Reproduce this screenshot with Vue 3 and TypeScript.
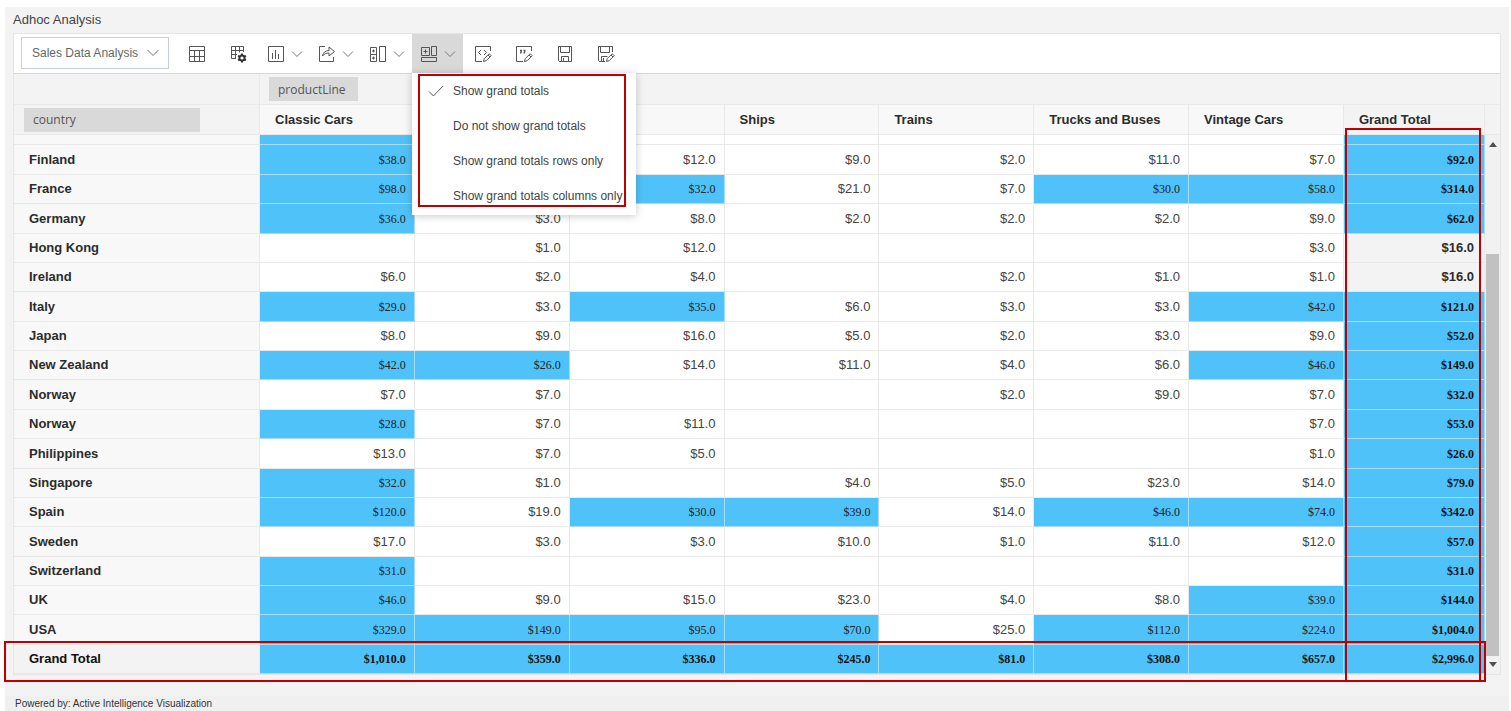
<script setup lang="ts">
import { ref } from 'vue'

interface Row {
  name: string
  cells: string[]
}

interface Tool {
  id: string
  label: string
  menu: boolean
}

const columns: string[] = [
  'Classic Cars',
  '',
  '',
  'Ships',
  'Trains',
  'Trucks and Buses',
  'Vintage Cars',
  'Grand Total',
]

const source: [string, string][] = [
  ['Finland', '38 - 12 9 2 11 7 92'],
  ['France', '98 - 32 21 7 30 58 314'],
  ['Germany', '36 3 8 2 2 2 9 62'],
  ['Hong Kong', '- 1 12 - - - 3 16'],
  ['Ireland', '6 2 4 - 2 1 1 16'],
  ['Italy', '29 3 35 6 3 3 42 121'],
  ['Japan', '8 9 16 5 2 3 9 52'],
  ['New Zealand', '42 26 14 11 4 6 46 149'],
  ['Norway', '7 7 - - 2 9 7 32'],
  ['Norway', '28 7 11 - - - 7 53'],
  ['Philippines', '13 7 5 - - - 1 26'],
  ['Singapore', '32 1 - 4 5 23 14 79'],
  ['Spain', '120 19 30 39 14 46 74 342'],
  ['Sweden', '17 3 3 10 1 11 12 57'],
  ['Switzerland', '31 - - - - - - 31'],
  ['UK', '46 9 15 23 4 8 39 144'],
  ['USA', '329 149 95 70 25 112 224 1,004'],
  ['Grand Total', '1,010 359 336 245 81 308 657 2,996'],
]

const rows: Row[] = source.map(([name, values]) => ({
  name,
  cells: values.split(' ').map((v) => (v === '-' ? '' : v)),
}))

const isHigh = (value: string): boolean => Number(value.replace(',', '')) > 25

const tools: Tool[] = [
  { id: 'grid', label: 'Grid', menu: false },
  { id: 'fields', label: 'Field settings', menu: false },
  { id: 'chart', label: 'Chart', menu: true },
  { id: 'export', label: 'Export', menu: true },
  { id: 'sub', label: 'Subtotals', menu: true },
  { id: 'grand', label: 'Grand totals', menu: true },
  { id: 'code', label: 'Conditional formatting', menu: false },
  { id: 'number', label: 'Number formatting', menu: false },
  { id: 'save', label: 'Save', menu: false },
  { id: 'saveas', label: 'Save as', menu: false },
]

const options: string[] = [
  'Show grand totals',
  'Do not show grand totals',
  'Show grand totals rows only',
  'Show grand totals columns only',
]

const selected = ref(0)
const report = ref('Sales Data Analysis')
</script>

<template>
  <div class="page">
    <h1 class="title">Adhoc Analysis</h1>
    <main class="panel">
      <div class="toolbar">
        <div class="picker">
          <select v-model="report" aria-label="Report">
            <option>Sales Data Analysis</option>
          </select>
          <svg class="chev" width="12" height="8" viewBox="0 0 12 8"><path d="M.5 1 6 6.5 11.5 1" /></svg>
        </div>
        <div v-for="t in tools" :key="t.id" class="slot">
          <button type="button" class="tool" :class="{ wide: t.menu, active: t.id === 'grand' }" :aria-label="t.label">
            <svg class="icon" width="18" height="18" viewBox="0 0 18 18">
              <g v-if="t.id === 'grid'">
                <path d="M1.5 1.5h15v15h-15zM1.5 5.500h15M1.5 11.5h15M6.5 5.500v11M11.5 5.500v11" />
              </g>
              <g v-else-if="t.id === 'fields'">
                <path d="M14.500 7V1.500h-12v12H7M2.500 5.500h12M2.500 9.500H8M6.500 1.500v12M10.500 1.500v6" />
                <circle cx="13" cy="13" r="2.600" class="gear" />
                <path class="teeth" d="M13 8.500v2M13 15.500v2M9.100 10.750l1.800 1M15.100 14.250l1.800 1M9.100 15.250l1.800-1M15.100 11.750l1.800-1" />
              </g>
              <g v-else-if="t.id === 'chart'">
                <path d="M1.500 1.500h15v15h-15zM5.500 8v6M8.500 5v9M11.500 9v5" />
              </g>
              <g v-else-if="t.id === 'export'">
                <path d="M7 1.500H1.500v15h14V12" />
                <path d="M4.500 11C5 7.500 7.500 5.500 11 5.500V2L16.500 6.500 11 11V8C8 8 6 9 4.500 11z" />
              </g>
              <g v-else-if="t.id === 'sub'">
                <path d="M1.500 2.500h6v14h-6zM1.500 9.500h6M10.500 1.500h6v15h-6zM4.500 4.500v3M3 6h3M4.500 11.500v3M3 13h3" />
              </g>
              <g v-else-if="t.id === 'grand'">
                <path d="M1.500 2.500h8v8h-8zM5.500 4.500v4M3.500 6.500h4M11.500 1.500h5v9h-5zM1.500 12.500h15v4h-15z" />
              </g>
              <g v-else-if="t.id === 'code'">
                <path d="M16.500 6V1.500h-15v15H8" />
                <path d="M7 5 4.500 7.500 7 10M10 5l2.500 2.500L10 10" />
                <path d="M9.500 16.500l.7-2.800 5-5 2 2-5 5zM14 10l2 2" />
              </g>
              <g v-else-if="t.id === 'number'">
                <path d="M16.500 6V1.500h-15v15H8" />
                <path class="bold" d="M5 5.500h1.200v1.200L5.500 8.500M8.500 5.500h1.200v1.200L9 8.500" />
                <path d="M9.500 16.500l.7-2.800 5-5 2 2-5 5zM14 10l2 2" />
              </g>
              <g v-else-if="t.id === 'save'">
                <path d="M2.500 1.500h13v15h-12l-1-1zM4.500 1.500v6h9v-6M5.500 16.500v-5h7v5M7.500 13v3.500" />
              </g>
              <g v-else>
                <path d="M15.500 7V1.500h-14v14l1 1H8M3.500 1.500v6h9v-6M4.500 16.500v-5h6M6.500 13v3.500" />
                <path d="M9.500 16.500l.7-2.800 5-5 2 2-5 5zM14 10l2 2" />
              </g>
            </svg>
            <svg v-if="t.menu" class="chev" width="12" height="8" viewBox="0 0 12 8"><path d="M1 1.500 6 6.500 11 1.500" /></svg>
          </button>
          <div v-if="t.id === 'grand'" class="menu" role="menu">
            <button v-for="(o, i) in options" :key="o" type="button" role="menuitemradio" :aria-checked="selected === i" @click="selected = i">
              <svg v-if="selected === i" class="tick" width="16" height="12" viewBox="0 0 16 12"><path d="M1 6.500 5.500 11 15 1" /></svg>
              <span>{{ o }}</span>
            </button>
            <div class="mark mark-menu"></div>
          </div>
        </div>
      </div>

      <div class="pivot">
        <table>
          <colgroup>
            <col class="c-first" />
            <col v-for="n in 7" :key="n" />
            <col class="c-last" />
          </colgroup>
          <thead>
            <tr>
              <th class="corner"></th>
              <th colspan="8" class="axis"><button type="button" class="chip">productLine</button></th>
            </tr>
            <tr>
              <th class="corner country"><button type="button" class="chip long">country</button></th>
              <th v-for="(c, i) in columns" :key="i" scope="col">{{ c }}</th>
            </tr>
          </thead>
          <tbody>
            <tr class="partial">
              <th></th>
              <td class="high"></td>
              <td v-for="n in 6" :key="n"></td>
              <td class="high"></td>
            </tr>
            <tr v-for="(r, i) in rows" :key="i">
              <th scope="row">{{ r.name }}</th>
              <td v-for="(v, j) in r.cells" :key="j" :class="{ high: isHigh(v) }">{{ v ? '$' + v + '.0' : '' }}</td>
            </tr>
          </tbody>
        </table>
        <div class="side">
          <div class="side-axis"></div>
          <div class="side-head"></div>
          <div class="scroll">
            <svg width="8" height="5" viewBox="0 0 8 5"><path d="M0 5 4 0l4 5z" /></svg>
            <div class="track"><div class="thumb"></div></div>
            <svg width="8" height="5" viewBox="0 0 8 5"><path d="M0 0l4 5 4-5z" /></svg>
          </div>
        </div>
        <div class="mark mark-col"></div>
        <div class="mark mark-row"></div>
      </div>
    </main>
    <footer>Powered by: Active Intelligence Visualization</footer>
  </div>
</template>

<style>
body {
  margin: 0;
  background: #fff;
}
</style>

<style scoped>
* {
  box-sizing: border-box;
}
.page {
  display: flex;
  flex-direction: column;
  min-height: calc(100vh - 7px);
  margin: 7px 2px 0 5px;
  background: #f3f3f3;
  font-family: "Liberation Sans", Arial, sans-serif;
  color: #333;
}
.title {
  margin: 0;
  padding: 5px 8px 0;
  height: 26px;
  font-size: 13px;
  line-height: 16px;
  font-weight: 400;
  color: #444;
}
.panel {
  margin: 0 8px;
  border: 1px solid #e5e5e5;
}
button,
select {
  font-family: inherit;
  border: 0;
  margin: 0;
  border-radius: 0;
}
.toolbar {
  display: flex;
  height: 40px;
  background: #fff;
  border-bottom: 1px solid #d6d6d6;
}
.picker {
  display: grid;
  align-items: center;
  width: 148px;
  margin: 3px 8px 4px 7px;
}
.picker select,
.picker .chev {
  grid-area: 1 / 1;
}
.picker select {
  appearance: none;
  height: 32px;
  padding: 0 10px;
  border: 1px solid #c9cfe0;
  background: #fff;
  font-size: 12px;
  color: #666;
}
.picker .chev {
  justify-self: end;
  margin-right: 10px;
  pointer-events: none;
}
svg path,
svg circle {
  fill: none;
  stroke: #555;
  stroke-width: 1;
}
.chev path {
  stroke: #777;
}
.slot {
  position: relative;
  display: flex;
}
.tool {
  display: flex;
  align-items: center;
  justify-content: center;
  gap: 6px;
  width: 41px;
  padding: 0 1px 0 0;
  background: transparent;
}
.tool.wide {
  width: 51px;
  padding: 0;
}
.tool.active {
  background: #d9d9d9;
}
.icon .gear {
  stroke: #333;
  stroke-width: 2;
}
.icon .teeth {
  stroke: #333;
  stroke-width: 2;
}
.icon .bold {
  stroke-width: 1.5;
}
.menu {
  position: absolute;
  z-index: 3;
  top: 39px;
  left: 0;
  width: 224px;
  height: 142px;
  background: #fff;
  box-shadow: 0 1px 8px rgba(0, 0, 0, 0.22);
}
.menu button {
  display: grid;
  grid-template-columns: 25px 1fr;
  align-items: center;
  width: 100%;
  height: 35px;
  padding: 0 0 0 16px;
  background: transparent;
  font-size: 12px;
  color: #444;
  text-align: left;
  white-space: nowrap;
}
.menu span {
  grid-column: 2;
}
.menu svg,
.menu span {
  grid-row: 1;
}
.mark {
  position: absolute;
  border: 2px solid #c00000;
  pointer-events: none;
}
.mark-menu {
  inset: 1px 10px 8px 6px;
}
.pivot {
  position: relative;
  display: flex;
}
.mark-col {
  top: 54px;
  right: 19px;
  bottom: -8px;
  width: 136px;
}
.mark-row {
  left: -10px;
  right: 14px;
  bottom: -8px;
  height: 41px;
}
table {
  flex: 1;
  width: 0;
  table-layout: fixed;
  border-collapse: separate;
  border-spacing: 0;
}
.c-first {
  width: 246px;
}
.c-last {
  width: 141px;
}
th,
td {
  height: 29px;
  padding: 0 8px 0 15px;
  border: 0 solid #e9e9e9;
  border-width: 0 1px 1px 0;
  font-size: 13px;
  line-height: 16px;
}
tbody tr:nth-child(8n + 2) > *,
tbody tr:nth-child(8n + 4) > *,
tbody tr:nth-child(8n + 7) > * {
  height: 30px;
}
th {
  background: #f8f8f8;
  text-align: left;
  color: #2c2c2c;
}
td {
  background: #fff;
  text-align: right;
  color: #444;
}
td:last-child {
  padding-right: 10px;
  background: #f3f3f3;
  font-weight: 700;
  color: #2c2c2c;
}
thead th {
  height: 31px;
}
thead tr + tr th {
  height: 30px;
}
thead .corner,
thead .axis,
thead th:last-child {
  background: #f3f3f3;
}
thead .axis {
  padding: 0 9px;
  border-right: 0;
}
thead .country {
  padding: 0 10px;
}
.chip {
  display: block;
  height: 24px;
  padding: 0 12px 0 9px;
  background: #d9d9d9;
  font-family: "Open Sans", sans-serif;
  font-size: 12px;
  color: #555;
  text-align: left;
}
.chip.long {
  width: 176px;
}
tbody .partial > * {
  height: 10px;
  padding: 0;
}
td.high,
td.high:last-child {
  background: #4fc3f9;
  border-color: #a8dcf0;
  font-family: "Liberation Serif", "Times New Roman", serif;
  font-size: 12px;
  color: #222;
}
tbody tr:last-child > *,
td.high:last-child {
  font-weight: 700;
  color: #111;
}
tbody tr:last-child th {
  background: #f3f3f3;
}
.side {
  display: flex;
  flex-direction: column;
  width: 15px;
}
.side-axis {
  height: 31px;
  border-bottom: 1px solid #e9e9e9;
}
.side-head {
  height: 30px;
  border-bottom: 1px solid #e9e9e9;
}
.scroll {
  flex: 1;
  display: flex;
  flex-direction: column;
  align-items: center;
  gap: 6px;
  padding: 7px 1px;
  background: #f1f1f1;
}
.scroll path {
  fill: #505050;
  stroke: none;
}
.track {
  flex: 1;
  display: flex;
  width: 100%;
  flex-direction: column;
  justify-content: flex-end;
}
.thumb {
  height: 80%;
  background: #c1c1c1;
}
footer {
  margin-top: auto;
  padding: 0 10px;
  background: #f0f0f0;
  font-size: 10px;
  line-height: 15px;
  color: #333;
}
</style>
